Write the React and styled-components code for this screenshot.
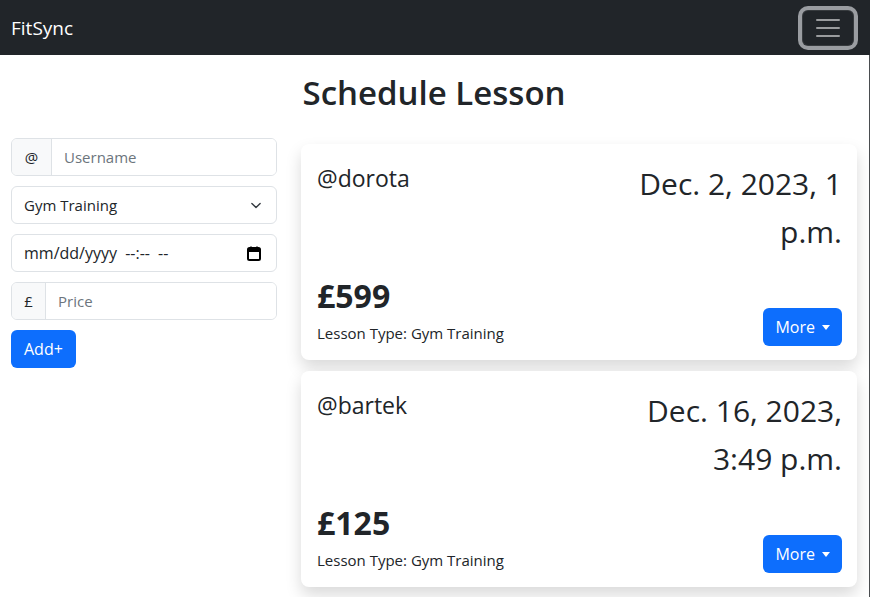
import React from "react";
import styled, { createGlobalStyle } from "styled-components";

const GlobalStyle = createGlobalStyle`
  body {
    margin: 0;
    font-family: "Open Sans", "Liberation Sans", sans-serif;
    color: #212529;
    background: #fff;
  }
  * {
    box-sizing: border-box;
  }
`;

const lessons = [
  {
    id: 1,
    user: "dorota",
    date: "Dec. 2, 2023, 1 p.m.",
    price: 599,
    type: "Gym Training",
  },
  {
    id: 2,
    user: "bartek",
    date: "Dec. 16, 2023, 3:49 p.m.",
    price: 125,
    type: "Gym Training",
  },
];

const App = () => {
  return (
    <>
      <GlobalStyle />
      <Navbar>
        <Brand href="#">FitSync</Brand>
        <Toggler aria-label="Toggle navigation">
          <svg width="28" height="28" viewBox="0 0 28 28">
            <path
              d="M3 6h22M3 14h22M3 22h22"
              stroke="rgba(255,255,255,0.55)"
              strokeWidth="2"
              strokeLinecap="round"
            />
          </svg>
        </Toggler>
      </Navbar>
      <Page>
        <Title>Schedule Lesson</Title>
        <Layout>
          <Form onSubmit={(e) => e.preventDefault()}>
            <InputGroup>
              <Addon $w={40}>@</Addon>
              <Field placeholder="Username" />
            </InputGroup>
            <Select defaultValue="gym">
              <option value="gym">Gym Training</option>
              <option value="yoga">Yoga</option>
            </Select>
            <DateBox>
              <span>mm/dd/yyyy --:-- --</span>
              <svg width="14" height="15" viewBox="0 0 14 15">
                <rect x="1" y="2" width="12" height="12" rx="1.5" fill="none" stroke="#000" strokeWidth="2" />
                <rect x="1" y="2" width="12" height="4" fill="#000" />
                <path d="M4 0.5v2.5M10 0.5v2.5" stroke="#000" strokeWidth="1.6" />
              </svg>
            </DateBox>
            <InputGroup>
              <Addon $w={34}>£</Addon>
              <Field placeholder="Price" />
            </InputGroup>
            <Button type="submit">Add+</Button>
          </Form>
          <Cards>
            {lessons.map((lesson) => {
              const { id, user, date, price, type } = lesson;
              return (
                <Card key={id}>
                  <TopRow>
                    <Username>@{user}</Username>
                    <DateText>{date}</DateText>
                  </TopRow>
                  <BottomRow>
                    <div>
                      <Price>£{price}</Price>
                      <LessonType>Lesson Type: {type}</LessonType>
                    </div>
                    <Button type="button">
                      More <Caret />
                    </Button>
                  </BottomRow>
                </Card>
              );
            })}
          </Cards>
        </Layout>
      </Page>
    </>
  );
};

const Navbar = styled.nav`
  height: 55px;
  background: #212529;
  display: flex;
  align-items: center;
  justify-content: space-between;
  padding: 0 16px 0 11px;
`;

const Brand = styled.a`
  color: #fff;
  font-size: 19px;
  text-decoration: none;
`;

const Toggler = styled.button`
  width: 52px;
  height: 36px;
  display: flex;
  align-items: center;
  justify-content: center;
  background: transparent;
  border: 1px solid rgba(255, 255, 255, 0.1);
  border-radius: 6px;
  box-shadow: 0 0 0 4px #9a9da1;
  padding: 0;
`;

const Page = styled.main`
  border-right: 1px solid #4a4d50;
  min-height: 542px;
  padding: 19px 12px 0 11px;
`;

const Title = styled.h2`
  margin: 0 0 26px;
  text-align: center;
  font-size: 33px;
  font-weight: 600;
  line-height: 38px;
`;

const Layout = styled.div`
  display: grid;
  grid-template-columns: 266px 556px;
  column-gap: 24px;
  align-items: start;
`;

const Form = styled.form`
  display: flex;
  flex-direction: column;
  gap: 10px;
`;

const InputGroup = styled.div`
  display: flex;
  height: 38px;
  border: 1px solid #dee2e6;
  border-radius: 6px;
  overflow: hidden;
`;

const Addon = styled.span`
  width: ${(p) => p.$w}px;
  display: flex;
  align-items: center;
  justify-content: center;
  background: #f8f9fa;
  border-right: 1px solid #dee2e6;
  font-size: 15px;
`;

const Field = styled.input`
  flex: 1;
  min-width: 0;
  border: 0;
  padding: 0 12px;
  font-family: inherit;
  font-size: 15px;
  color: #212529;
  outline: none;
  &::placeholder {
    color: #6c757d;
  }
`;

const Select = styled.select`
  height: 38px;
  border: 1px solid #dee2e6;
  border-radius: 6px;
  padding: 0 36px 0 12px;
  font-family: inherit;
  font-size: 15px;
  color: #212529;
  background: #fff
    url("data:image/svg+xml,%3csvg xmlns='http://www.w3.org/2000/svg' viewBox='0 0 16 16'%3e%3cpath fill='none' stroke='%23343a40' stroke-linecap='round' stroke-linejoin='round' stroke-width='2' d='m2 5 6 6 6-6'/%3e%3c/svg%3e")
    no-repeat right 13px center / 14px 11px;
  appearance: none;
`;

const DateBox = styled.div`
  height: 38px;
  border: 1px solid #dee2e6;
  border-radius: 6px;
  padding: 0 15px 0 12px;
  display: flex;
  align-items: center;
  justify-content: space-between;
  font-size: 16px;
  word-spacing: 4px;
  color: #212529;
`;

const Button = styled.button`
  align-self: ${(p) => (p.type === "submit" ? "flex-start" : "flex-end")};
  height: 38px;
  padding: 0 ${(p) => (p.type === "submit" ? 13 : 12)}px;
  display: inline-flex;
  align-items: center;
  gap: 6px;
  background: #0d6efd;
  color: #fff;
  border: 0;
  border-radius: 6px;
  font-family: inherit;
  font-size: 16px;
`;

const Caret = styled.span`
  display: inline-block;
  border-top: 5px solid #fff;
  border-left: 4px solid transparent;
  border-right: 4px solid transparent;
  margin-left: 1px;
`;

const Cards = styled.div`
  display: flex;
  flex-direction: column;
  gap: 11px;
  padding-top: 6px;
`;

const Card = styled.div`
  height: 216px;
  background: #fff;
  border-radius: 8px;
  box-shadow: 0 8px 16px rgba(0, 0, 0, 0.15);
  padding: 16px 15px 14px 16px;
  display: flex;
  flex-direction: column;
  justify-content: space-between;
`;

const TopRow = styled.div`
  display: flex;
  justify-content: space-between;
  align-items: flex-start;
`;

const Username = styled.div`
  font-size: 23px;
  line-height: 36px;
`;

const DateText = styled.div`
  width: 220px;
  text-align: right;
  font-size: 30px;
  line-height: 48px;
`;

const BottomRow = styled.div`
  display: flex;
  justify-content: space-between;
  align-items: flex-end;
`;

const Price = styled.div`
  font-size: 32px;
  font-weight: 700;
  line-height: 38px;
  margin-bottom: 7px;
`;

const LessonType = styled.div`
  font-size: 15px;
  line-height: 22px;
  margin-bottom: 2px;
`;

export default App;
